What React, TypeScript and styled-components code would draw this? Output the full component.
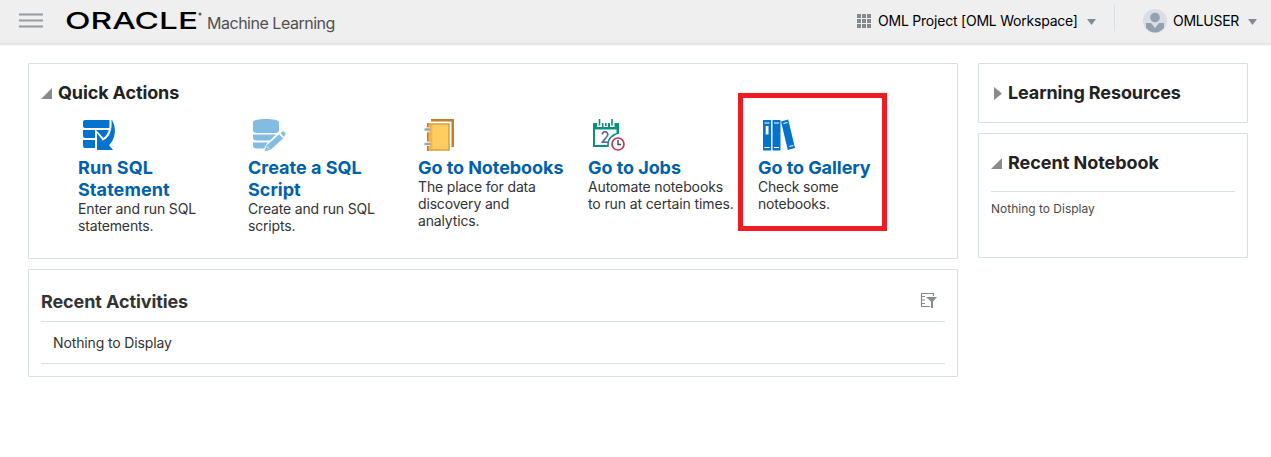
import React from "react";
import styled, { createGlobalStyle } from "styled-components";

const GlobalStyle = createGlobalStyle`
  * { box-sizing: border-box; }
  body {
    margin: 0;
    background: #fff;
    color: #222;
    font-family: Inter, "Liberation Sans", sans-serif;
    font-size: 14px;
  }
  svg { display: block; flex: none; }
  h1, h2, h3, p { margin: 0; }
`;

const Page = styled.div`
  width: 1271px;
  height: 457px;
  overflow: hidden;
`;

const Header = styled.header`
  display: flex;
  align-items: flex-start;
  height: 43px;
  padding-left: 19px;
  background: #efefef;
  box-shadow: 0 1px 2px 1px rgba(0, 0, 0, 0.12);
`;

const MenuButton = styled.div`
  margin-top: 13px;
  width: 24px;
`;

const Logo = styled.div`
  margin: 5px 0 0 22px;
  width: 142px;
`;

const ProductName = styled.h1`
  flex: 1;
  padding-top: 13px;
  font-size: 16px;
  font-weight: 400;
  line-height: 20px;
  letter-spacing: -0.48px;
  color: #4f4f4f;
`;

const HeaderItem = styled.div<{ $width: number }>`
  display: flex;
  align-items: center;
  width: ${(p) => p.$width}px;
  height: 42px;
  color: #000;
  white-space: nowrap;
`;

const HeaderLabel = styled.span<{ $left: number; $width: number; $spacing: number }>`
  margin-left: ${(p) => p.$left}px;
  padding-bottom: 1px;
  width: ${(p) => p.$width}px;
  letter-spacing: ${(p) => p.$spacing}px;
`;

const Divider = styled.div`
  width: 1px;
  height: 26px;
  margin: 5px 28px 0 0;
  background: #d6dfe6;
`;

const Main = styled.main`
  display: grid;
  grid-template-columns: 930px 270px;
  column-gap: 20px;
  align-items: start;
  padding: 20px 0 0 28px;
`;

const Column = styled.div`
  display: flex;
  flex-direction: column;
  gap: 10px;
`;

const Panel = styled.section<{ $height: number }>`
  height: ${(p) => p.$height}px;
  padding: 0 12px;
  border: 1px solid #d6dfe6;
  border-radius: 1px;
  background: #fff;
`;

const PanelHeader = styled.div<{ $top: number; $height: number; $ruled?: boolean }>`
  display: flex;
  align-items: flex-start;
  height: ${(p) => p.$height}px;
  padding-top: ${(p) => p.$top}px;
  border-bottom: ${(p) => (p.$ruled ? "1px solid #d6dfe6" : "none")};
`;

const PanelTitle = styled.h2<{ $spacing: number; $soft?: boolean }>`
  flex: 1;
  font-size: 18px;
  font-weight: 700;
  line-height: 22px;
  letter-spacing: ${(p) => p.$spacing}px;
  color: ${(p) => (p.$soft ? "#333" : "#222")};
  white-space: nowrap;
`;

const Disclosure = styled.div`
  width: 17px;
  height: 22px;
`;

const Actions = styled.div`
  display: grid;
  grid-template-columns: repeat(5, 170px);
  padding-left: 37px;
`;

const Action = styled.div`
  height: 120px;
  white-space: nowrap;
`;

const ActionIcon = styled.div`
  height: 39px;
`;

const ActionTitle = styled.h3<{ $spacing: number }>`
  margin-bottom: -1px;
  font-size: 18px;
  font-weight: 700;
  line-height: 22px;
  letter-spacing: ${(p) => p.$spacing}px;
  color: #0061ab;
`;

const ActionText = styled.p<{ $spacing: number }>`
  font-size: 14px;
  line-height: 17px;
  letter-spacing: ${(p) => p.$spacing}px;
  color: #333;
`;

const Line = styled.span`
  display: block;
`;

const EmptyRow = styled.div`
  height: 42px;
  padding-left: 12px;
  border-bottom: 1px solid #d6dfe6;
  line-height: 42px;
  letter-spacing: -0.13px;
  color: #333;
`;

const EmptyNote = styled.p`
  padding-top: 9px;
  font-size: 12px;
  line-height: 16px;
  color: #4a4a4a;
`;

const Highlight = styled.div`
  position: absolute;
  left: 738px;
  top: 93px;
  width: 149px;
  height: 138px;
  border: 5px solid #ed1c24;
`;

const Caret = () => (
  <svg width="9" height="7" viewBox="0 0 9 7">
    <path d="M0 1h9L4.500 7z" fill="#848a8d" />
  </svg>
);

const Expanded = () => (
  <svg width="11" height="22" viewBox="0 0 11 22">
    <path d="M11 6v11H0z" fill="#878b8e" />
  </svg>
);

const Collapsed = () => (
  <svg width="11" height="22" viewBox="0 0 11 22">
    <path d="M3 5l8 6.500L3 18z" fill="#878b8e" />
  </svg>
);

const RunIcon = () => (
  <svg width="44" height="38" viewBox="0 0 44 38">
    <g fill="#0572ce">
      <path d="M5 4q0-2 2-2h24.500v8H7q-2 0-2-2zM5 12h12v8H7q-2 0-2-2zM5 22h12v8H7q-2 0-2-2z" />
      <path d="M18 12H31q-1.500 5-5.500 8z" />
      <path d="M33 2.500c.5 10-2 16.500-8.500 20L19 15" fill="none" stroke="#fff" strokeWidth="2" />
      <path d="M34 2c4.500 8 4 18-3 25.300L35 32H19V15l5.700 7.500c7-3 9.500-10 8.800-20.500z" />
    </g>
  </svg>
);

const ScriptIcon = () => (
  <svg width="44" height="38" viewBox="0 0 44 38">
    <g fill="#83bce3">
      <path d="M5 4c0-4 26-4 26 0v9L29 15H9q-4 0-4-3zM5 16.500h23l-6 6H9q-4 0-4-3zM5 24.500h15l-4 6H9q-4 0-4-3z" />
      <path d="M31.500 16l4 4-12.500 11.500-6.500 2 2-6z" stroke="#fff" strokeWidth="1.600" paintOrder="stroke" />
      <path d="M32.500 15l2-1.500q1.500-.5 2.500 1 1 1 0 2.500L36 19z" />
    </g>
    <path d="M19 28.500l2.500 2.500M31.500 16.300l4 4" stroke="#fff" strokeWidth="1" />
  </svg>
);

const NotebookIcon = () => (
  <svg width="44" height="38" viewBox="0 0 44 38">
    <path d="M13 1h23v28h-2.500V3.500H13z" fill="#c17e2d" />
    <path d="M10 6h21v26H10z" fill="#ffcd60" stroke="#dba03d" strokeWidth="1.500" />
    <path d="M10.500 7h4v24h-4z" fill="#f7b256" />
    <path d="M9.700 5v6M9.700 15v8M9.700 28v5" stroke="#bd7d2b" strokeWidth="1.500" />
    <path d="M7 11.500h5M7 26h5" stroke="#fff" strokeWidth="4" />
    <path d="M7.500 11.500h4M7.500 26h4" stroke="#98a6b3" strokeWidth="2.400" strokeLinecap="round" />
  </svg>
);

const JobsIcon = () => (
  <svg width="44" height="38" viewBox="0 0 44 38">
    <path d="M5 5h4v4.500h5V5h1.500v4.500H20V5h2v4.500h4.500V5H31v10h-2.500v-4.500H7v16.500h13V29H5z" fill="#09917e" />
    <path d="M5.500 9h25v2.500h-25z" fill="#09917e" />
    <path d="M11.500 1v6.500M17.800 5v3M24 1v6.500" stroke="#09917e" strokeWidth="1.600" />
    <path d="M20 29q-1-11 11-14" fill="none" stroke="#09917e" strokeWidth="1.500" />
    <text x="12.500" y="25" fontSize="16" fontWeight="500" fontFamily="Inter, sans-serif" fill="#5261a7" textLength="9" lengthAdjust="spacingAndGlyphs">2</text>
    <circle cx="30" cy="26" r="6" fill="#fff" stroke="#c03851" strokeWidth="1.700" />
    <path d="M30 22v4.500h3" fill="none" stroke="#444" strokeWidth="1.400" />
  </svg>
);

const GalleryIcon = () => (
  <svg width="44" height="38" viewBox="0 0 44 38">
    <g fill="#0572ce">
      <path d="M5 2h8v30.500H5zM14.500 2h8v30.500h-8z" />
      <path d="M23 3.500l7.200-2L37 30l-7.200 2z" />
    </g>
    <path d="M6.500 5h5M6.500 29.500h5M16 5h5M16 29.500h5M25.500 5.500l4-1M31.300 28.500l4-1" stroke="#fff" strokeWidth="1" />
    <path d="M7.700 8h2.800v8.500H7.700z" fill="#fff" />
  </svg>
);

const actions = [
  { icon: <RunIcon />, title: ["Run SQL", "Statement"], ts: 0.07, text: ["Enter and run SQL", "statements."], ds: -0.15 },
  { icon: <ScriptIcon />, title: ["Create a SQL", "Script"], ts: 0, text: ["Create and run SQL", "scripts."], ds: -0.18 },
  { icon: <NotebookIcon />, title: ["Go to Notebooks"], ts: -0.06, text: ["The place for data", "discovery and", "analytics."], ds: -0.16 },
  { icon: <JobsIcon />, title: ["Go to Jobs"], ts: -0.06, text: ["Automate notebooks", "to run at certain times."], ds: -0.12 },
  { icon: <GalleryIcon />, title: ["Go to Gallery"], ts: -0.06, text: ["Check some", "notebooks."], ds: -0.2 },
];

export default function App() {
  return (
    <Page>
      <GlobalStyle />
      <Header>
        <MenuButton>
          <svg width="24" height="16" viewBox="0 0 24 16">
            <path d="M0 1.500h24M0 7.500h24M0 13.500h24" stroke="#949b9f" strokeWidth="2" />
          </svg>
        </MenuButton>
        <Logo>
          <svg width="142" height="34" viewBox="0 0 142 34">
            <text x="0" y="24" fontFamily="Inter, sans-serif" fontSize="23.500" fontWeight="500" fill="#000" textLength="133" lengthAdjust="spacingAndGlyphs">ORACLE</text>
            <circle cx="135" cy="9" r="1.500" fill="#555" />
          </svg>
        </Logo>
        <ProductName>Machine Learning</ProductName>
        <HeaderItem $width={257}>
          <svg width="15" height="15" viewBox="0 0 15 15">
            <path d="M0 0h4v4H0zM5 0h4v4H5zM10 0h4v4h-4zM0 5h4v4H0zM5 5h4v4H5zM10 5h4v4h-4zM0 10h4v4H0zM5 10h4v4H5zM10 10h4v4h-4z" fill="#85898c" />
          </svg>
          <HeaderLabel $left={6} $width={209} $spacing={-0.22}>OML Project [OML Workspace]</HeaderLabel>
          <Caret />
        </HeaderItem>
        <Divider />
        <HeaderItem $width={128}>
          <svg width="24" height="24" viewBox="0 0 24 24">
            <circle cx="12" cy="12" r="12" fill="#d8dee3" />
            <circle cx="12" cy="8.500" r="4.800" fill="#93a1ae" />
            <path d="M3 14h5l4 5 4-5h5v5q-9 9-18 0z" fill="#93a1ae" />
          </svg>
          <HeaderLabel $left={6} $width={75} $spacing={-0.3}>OMLUSER</HeaderLabel>
          <Caret />
        </HeaderItem>
      </Header>
      <Main>
        <Column>
          <Panel $height={196}>
            <PanelHeader $top={18} $height={54}>
              <Disclosure><Expanded /></Disclosure>
              <PanelTitle $spacing={-0.13}>Quick Actions</PanelTitle>
            </PanelHeader>
            <Actions>
              {actions.map((a) => (
                <Action key={a.title[0]}>
                  <ActionIcon>{a.icon}</ActionIcon>
                  <ActionTitle $spacing={a.ts}>{a.title.map((t) => <Line key={t}>{t}</Line>)}</ActionTitle>
                  <ActionText $spacing={a.ds}>{a.text.map((t) => <Line key={t}>{t}</Line>)}</ActionText>
                </Action>
              ))}
            </Actions>
          </Panel>
          <Panel $height={108}>
            <PanelHeader $top={21} $height={52} $ruled>
              <PanelTitle $spacing={-0.1} $soft>Recent Activities</PanelTitle>
              <svg width="25" height="22" viewBox="0 0 25 22">
                <path d="M13.500 5V2.500H1.500v13H10M1.500 5.500H5M1.500 9H5M1.500 12.500H5" fill="none" stroke="#878b8e" strokeWidth="1.200" />
                <path d="M6 6h11l-4 4.500v6.500h-2v-6.500z" fill="#878b8e" />
              </svg>
            </PanelHeader>
            <EmptyRow>Nothing to Display</EmptyRow>
          </Panel>
        </Column>
        <Column>
          <Panel $height={60}>
            <PanelHeader $top={18} $height={58}>
              <Disclosure><Collapsed /></Disclosure>
              <PanelTitle $spacing={-0.12}>Learning Resources</PanelTitle>
            </PanelHeader>
          </Panel>
          <Panel $height={125}>
            <PanelHeader $top={18} $height={58} $ruled>
              <Disclosure><Expanded /></Disclosure>
              <PanelTitle $spacing={-0.03}>Recent Notebook</PanelTitle>
            </PanelHeader>
            <EmptyNote>Nothing to Display</EmptyNote>
          </Panel>
        </Column>
      </Main>
      <Highlight />
    </Page>
  );
}
